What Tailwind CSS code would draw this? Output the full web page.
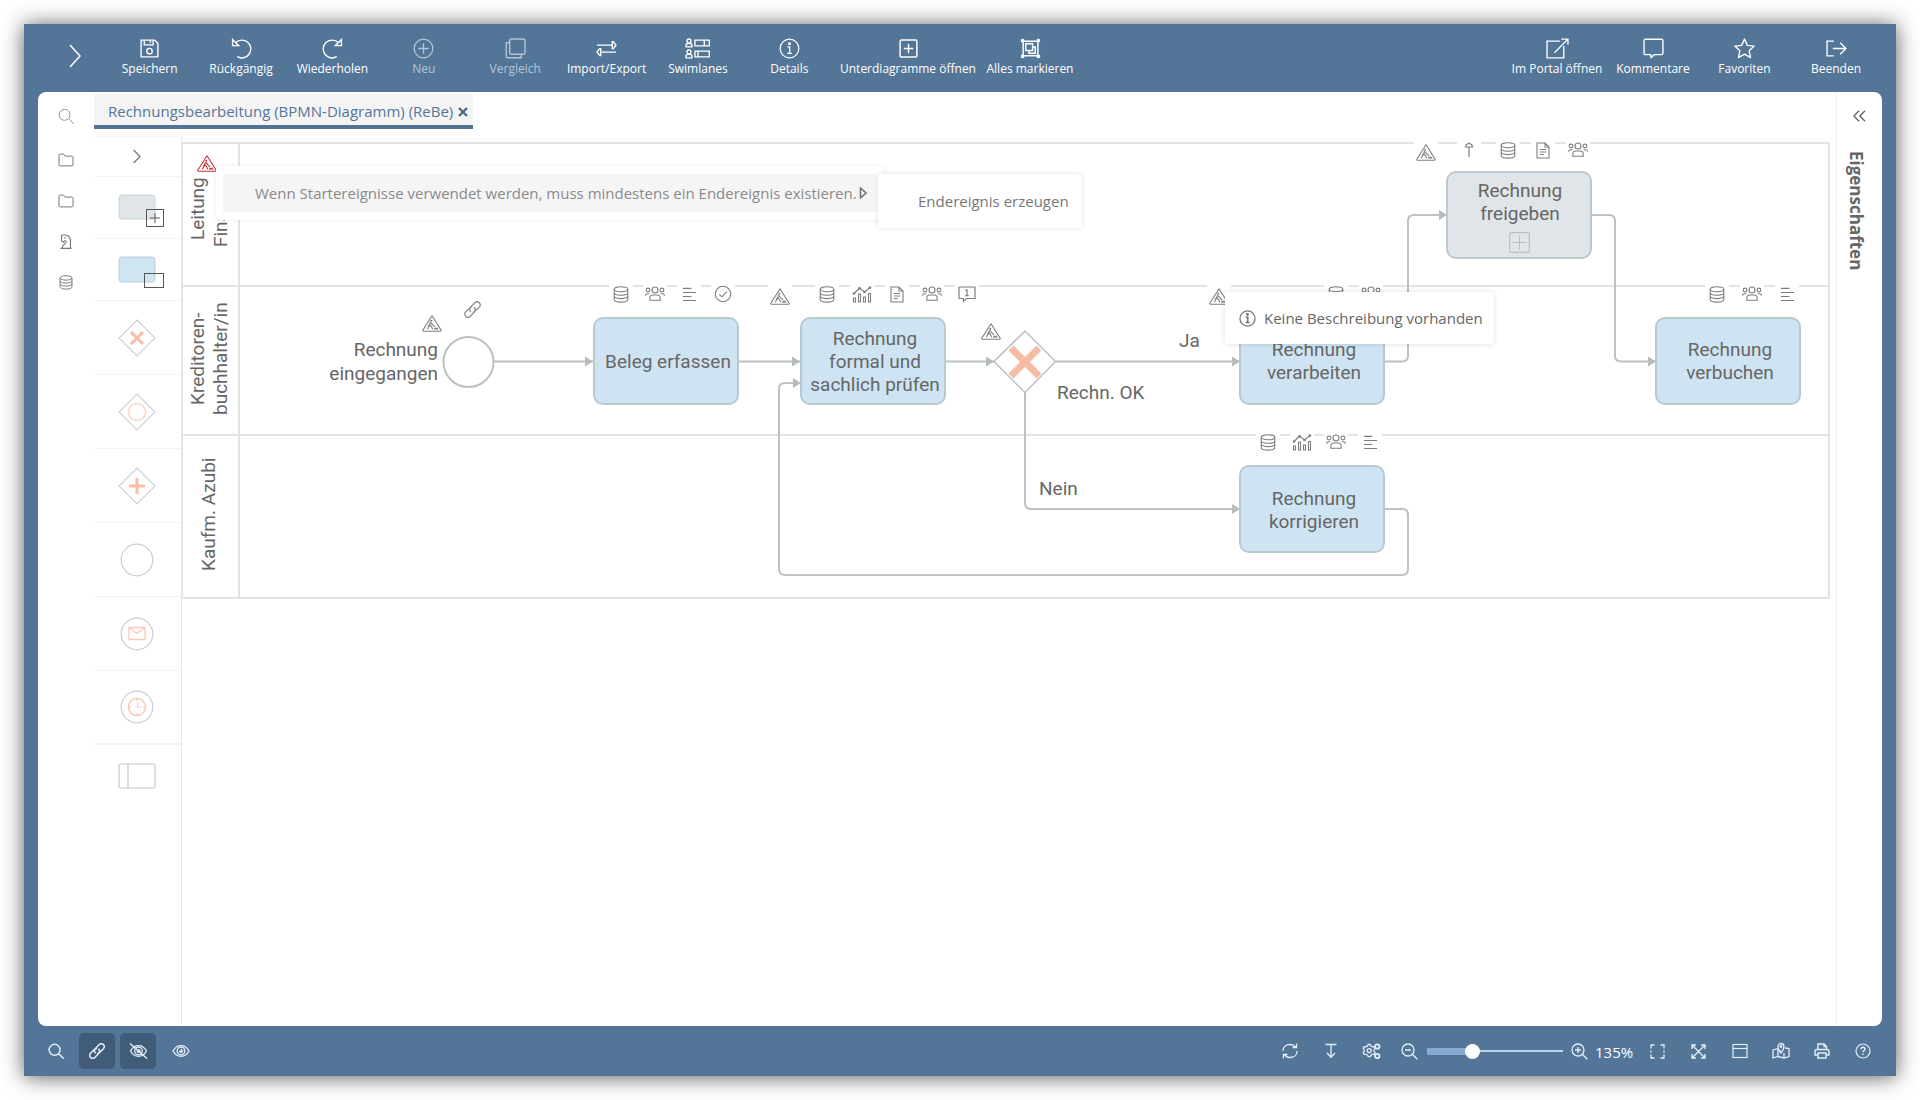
<!DOCTYPE html>
<html lang="de">
<head>
<meta charset="utf-8">
<title>Rechnungsbearbeitung (BPMN-Diagramm)</title>
<script src="https://cdn.jsdelivr.net/npm/@tailwindcss/browser@4"></script>
</head>
<body class="flex min-h-screen bg-white p-6 font-['Open_Sans',sans-serif]">

<svg class="hidden" aria-hidden="true">
  <symbol id="warn" viewBox="0 0 20 17"><path d="M10 .8 19.2 15.2q.3 1-.7 1H1.500q-1 0-.7-1Z" fill="none" stroke="currentColor" stroke-width="1.100" stroke-linejoin="round"/><circle cx="9.200" cy="5.700" r="1" fill="currentColor"/><path d="M8.500 7 7.600 10l2 1.500 1 2.700M7.600 10l-2.300 4.200M8.800 7.500l1.800 2.200 2.600 2.200M6 11.200l2.500-2" fill="none" stroke="currentColor" stroke-width="1.100"/><path d="M11.500 14.500 13 12.600l1 .7 1-1 1.700 2.200Z" fill="currentColor"/></symbol>
  <symbol id="db" viewBox="0 0 16 17"><g fill="none" stroke="currentColor" stroke-width="1.100"><ellipse cx="8" cy="3.300" rx="6.800" ry="2.500"/><path d="M1.200 3.300v10.200c0 1.400 3 2.600 6.800 2.600s6.800-1.200 6.800-2.600V3.300M1.200 6.700c0 1.400 3 2.500 6.800 2.500s6.800-1.100 6.800-2.500M1.200 10.100c0 1.400 3 2.500 6.800 2.500s6.800-1.100 6.800-2.500"/></g></symbol>
  <symbol id="people" viewBox="0 0 20 16"><g fill="none" stroke="currentColor" stroke-width="1.100"><circle cx="10" cy="4" r="3"/><circle cx="3" cy="4" r="1.900"/><circle cx="17" cy="4" r="1.900"/><path d="M4.800 14.300v-2c0-2.300 1.200-3.300 3-3.300h4.400c1.800 0 3 1 3 3.300v2ZM.6 9.700c0-1.500.9-2 2-2h1.800M19.400 9.700c0-1.500-.9-2-2-2h-1.800"/></g></symbol>
  <symbol id="lines" viewBox="0 0 16 16"><path d="M1 1.500h9M1 5.800h14M1 10.100h9M1 14.400h14" fill="none" stroke="currentColor" stroke-width="1.200"/></symbol>
  <symbol id="check" viewBox="0 0 18 18"><g fill="none" stroke="currentColor" stroke-width="1.100"><circle cx="9" cy="9" r="7.700"/><path d="m5.200 9.300 2.700 2.500 5-5.200"/></g></symbol>
  <symbol id="chart" viewBox="0 0 20 17"><g fill="none" stroke="currentColor" stroke-width="1.100"><path d="M1.500 12h2v4h-2ZM6.500 8h2v8h-2ZM11.500 11h2v5h-2ZM16.500 7.500h2V16h-2ZM2 7.500 7.500 2l5 4L18 1.500"/><circle cx="2" cy="7.500" r=".8"/><circle cx="7.500" cy="2.300" r=".8"/><circle cx="12.500" cy="6" r=".8"/><circle cx="18" cy="1.600" r=".8"/></g></symbol>
  <symbol id="doc" viewBox="0 0 14 17"><path d="M1 1h8l4 4v11H1ZM9 1v4h4M3.800 7.500h6.400M3.800 10h6.400M3.800 12.500h4" fill="none" stroke="currentColor" stroke-width="1.100"/></symbol>
  <symbol id="note" viewBox="0 0 18 17"><path d="M1 1h16v11.500H8.500L5.500 15.600V12.500H1ZM7.500 4.700 9 3.700v5.800M7.300 9.600h3.400" fill="none" stroke="currentColor" stroke-width="1.200" stroke-linejoin="round"/></symbol>
  <symbol id="up" viewBox="0 0 12 16"><path d="M6 15V5M2.500 5 3.300 2.700 6 1.300l2.700 1.400.8 2.300Z" fill="none" stroke="currentColor" stroke-width="1.200"/></symbol>
  <symbol id="link" viewBox="1.500 1.500 15 15"><g fill="none" stroke="currentColor" stroke-linecap="round"><path d="m7.400 10.600c-1-1.200-1-2.900.1-4L11 3c1.200-1.200 2.900-1.200 4 0s1.100 2.700 0 3.900L11.600 10.300c-.6.600-1.200.9-2 .9M10.600 7.400c1 1.200 1 2.900-.1 4L7 15c-1.200 1.200-2.900 1.200-4 0s-1.100-2.700 0-3.900L6.400 7.700c.6-.6 1.200-.9 2-.9"/></g></symbol>
  <symbol id="search" viewBox="0 0 18 18"><path d="M12.800 7.200a5.800 5.800 0 1 1-11.600 0a5.800 5.800 0 0 1 11.600 0ZM11.300 11.300l5.500 5.500" fill="none" stroke="currentColor"/></symbol>
  <symbol id="folder" viewBox="0 0 16 14"><path d="M1 2.300q0-1.200 1.200-1.200h3.300l1.700 2h6.600q1.200 0 1.200 1.200v7.400q0 1.200-1.200 1.200H2.200q-1.200 0-1.200-1.200Z" fill="none" stroke="currentColor"/></symbol>
  <symbol id="eye" viewBox="0 0 18 14"><g fill="none" stroke="currentColor" stroke-width="1.300"><path d="M1 7c2-3.600 4.800-5.300 8-5.300S15 3.400 17 7c-2 3.600-4.800 5.300-8 5.300S3 10.600 1 7Z"/><circle cx="9" cy="7" r="3.800"/><path d="M9 5.200A1.800 1.800 0 1 1 7.200 7H9Z" fill="currentColor" stroke-width=".5"/></g></symbol>
</svg>

<div class="flex min-w-0 flex-1 flex-col bg-[#537597] shadow-[0_1px_20px_rgba(50,50,50,0.8)]">

  <header class="flex h-[68px] items-stretch text-[12px] leading-4 text-white">
    <button class="ml-[26px] flex w-[54px] items-center justify-center pr-1 pb-1" aria-label="Menü">
      <svg class="h-6 w-3" viewBox="0 0 12 24" fill="none" stroke="currentColor" stroke-width="1.500"><path d="m1 1 10 11L1 23"/></svg>
    </button>
    <div class="grid w-[731px] grid-cols-8">
      <button class="flex flex-col items-center pt-[14px] whitespace-nowrap">
        <svg class="mb-[2px] size-[21px]" viewBox="0 0 20 20" fill="none" stroke="currentColor" stroke-width="1.300"><path d="M2 2h13l3 3v13H2ZM5 2v4.500h8.500V2M10.800 2v2.500"/><circle cx="10" cy="12.500" r="2.600"/></svg>Speichern</button>
      <button class="flex flex-col items-center pt-[14px] whitespace-nowrap">
        <svg class="mb-[2px] size-[21px]" viewBox="0 0 20 20" fill="none" stroke="currentColor" stroke-width="1.300"><path d="M1.500 1.500v5.800h5.800ZM4.500 4.300a8.500 8.500 0 1 1 1.500 13.500"/></svg>Rückgängig</button>
      <button class="flex flex-col items-center pt-[14px] whitespace-nowrap">
        <svg class="mb-[2px] size-[21px]" viewBox="0 0 20 20" fill="none" stroke="currentColor" stroke-width="1.300"><path d="M18.500 1.500v5.800h-5.800ZM15.500 4.300a8.500 8.500 0 1 0-1.500 13.500"/></svg>Wiederholen</button>
      <button class="flex flex-col items-center pt-[14px] whitespace-nowrap text-[#b4c5d8]">
        <svg class="mb-[2px] size-[21px]" viewBox="0 0 20 20" fill="none" stroke="currentColor" stroke-width="1.200"><circle cx="10" cy="10" r="8.900"/><path d="M10 5v10M5 10h10"/></svg>Neu</button>
      <button class="flex flex-col items-center pt-[14px] whitespace-nowrap text-[#b4c5d8]">
        <svg class="mb-[2px] size-[21px]" viewBox="0 0 20 20" fill="none" stroke="currentColor" stroke-width="1.300"><rect x="4.500" y="1" width="14.500" height="14.500" rx="1.500"/><path d="M4.500 4.500H1.200v13q0 1.300 1.300 1.300h13v-3.300"/></svg>Vergleich</button>
      <button class="flex flex-col items-center pt-[14px] whitespace-nowrap">
        <svg class="mb-[2px] size-[21px]" viewBox="0 0 20 20" fill="none" stroke="currentColor" stroke-width="1.300"><path d="M1 6.800h14.500V3.500h1l2.500 3.300-2.500 3.300h-1V6.800M19 13.400H4.500v-3.300h-1L1 13.400l2.500 3.300h1v-3.300"/></svg>Import/Export</button>
      <button class="flex flex-col items-center pt-[14px] whitespace-nowrap">
        <svg class="mb-[2px] h-[21px] w-[25px]" viewBox="0 0 24 20" fill="none" stroke="currentColor" stroke-width="1.300"><circle cx="3.800" cy="2.800" r="1.900"/><path d="M1 8.500V7q0-1.800 1.800-1.800h2Q6.600 5.200 6.600 7v1.500Z"/><circle cx="3.800" cy="13.300" r="1.900"/><path d="M1 19v-1.500q0-1.800 1.800-1.800h2q1.800 0 1.800 1.800V19ZM9.500 2h13.800v5.500H9.500ZM18.500 2v5.500M9.500 12.500h13.800V18H9.500ZM12.500 12.500V18"/></svg>Swimlanes</button>
      <button class="flex flex-col items-center pt-[14px] whitespace-nowrap">
        <svg class="mb-[2px] size-[21px]" viewBox="0 0 20 20" fill="none" stroke="currentColor" stroke-width="1.200"><circle cx="10" cy="10" r="8.900"/><path d="M8 8.500h2.200v6M7.800 14.700h4.600"/><circle cx="10" cy="5.500" r=".8" fill="currentColor"/></svg>Details</button>
    </div>
    <button class="flex w-[146px] flex-col items-center pt-[14px] whitespace-nowrap">
      <svg class="mb-[2px] size-[21px]" viewBox="0 0 20 20" fill="none" stroke="currentColor" stroke-width="1.400"><rect x="2" y="2" width="16" height="16" rx="1"/><path d="M10 5.500v9M5.500 10h9"/></svg>Unterdiagramme öffnen</button>
    <button class="flex w-[98px] flex-col items-center pt-[14px] whitespace-nowrap">
      <svg class="mb-[2px] size-[21px]" viewBox="0 0 20 20" fill="none" stroke="currentColor" stroke-width="1.400"><path d="M3 3h14v14H3ZM5.500 5.500h6.500V12H5.500ZM12 8.500h2.500v6h-6V12"/><path d="M1.300 1.300h2.400v2.400H1.300ZM16.300 1.300h2.400v2.400h-2.400ZM1.300 16.300h2.400v2.400H1.300ZM16.300 16.300h2.400v2.400h-2.400Z" fill="currentColor" stroke-width=".8"/></svg>Alles markieren</button>
    <div class="mr-[14px] ml-auto flex">
      <button class="flex w-[100px] flex-col items-center pt-[14px] whitespace-nowrap">
        <svg class="mb-[2px] h-[21px] w-[23px]" viewBox="0 0 22 20" fill="none" stroke="currentColor" stroke-width="1.300"><path d="M13.500 3H1v16h16V7.500M8 14 20.500 1.500M14.500 1H21v5.500"/></svg>Im Portal öffnen</button>
      <button class="flex w-[92px] flex-col items-center pt-[14px] whitespace-nowrap">
        <svg class="mb-[2px] size-[21px]" viewBox="0 0 20 20" fill="none" stroke="currentColor" stroke-width="1.300" stroke-linejoin="round"><path d="M2.500 1.200h15q1.500 0 1.500 1.500v11.600q0 1.500-1.500 1.500H11l-3.500 3v-3h-5Q1 15.800 1 14.300V2.700q0-1.500 1.500-1.500Z"/></svg>Kommentare</button>
      <button class="flex w-[91px] flex-col items-center pt-[14px] whitespace-nowrap">
        <svg class="mb-[2px] size-[21px]" viewBox="0 0 20 20" fill="none" stroke="currentColor" stroke-width="1.300" stroke-linejoin="round"><path d="m10 1 2.700 6 6.500.7-4.800 4.400 1.300 6.600L10 15.400l-5.700 3.300 1.300-6.600L.8 7.700l6.500-.7Z"/></svg>Favoriten</button>
      <button class="flex w-[92px] flex-col items-center pt-[14px] whitespace-nowrap">
        <svg class="mb-[2px] size-[21px]" viewBox="0 0 20 20" fill="none" stroke="currentColor" stroke-width="1.300"><path d="M7.500 3H1v14h6.500M6.500 10h12.500M13.500 4.500l5.500 5.500-5.500 5.500"/></svg>Beenden</button>
    </div>
  </header>

  <main class="mx-[14px] flex min-h-0 flex-1 overflow-hidden rounded-lg bg-white">
    <nav class="flex w-14 flex-col items-center pt-[15px] text-[#777]">
      <button class="flex h-[18px] w-[41px] items-center justify-center text-[#888]" aria-label="Suche"><svg class="size-[17px]"><use href="#search"/></svg></button>
      <button class="mt-[14px] flex size-[41px] items-center justify-center" aria-label="Ordner"><svg class="h-[14px] w-4"><use href="#folder"/></svg></button>
      <button class="flex size-[41px] items-center justify-center" aria-label="Ordner 2"><svg class="h-[14px] w-4"><use href="#folder"/></svg></button>
      <button class="flex size-[41px] items-center justify-center" aria-label="Strategie"><svg class="h-[15px] w-[14px]" viewBox="0 0 14 15" fill="none" stroke="currentColor" stroke-width="1.100"><path d="M1.500 14.400h11M3.500 14v-1.500l4.300-5M2.500 1h4c3.500.6 5 2.800 5 6.500V14M2.500 1v6l2 1 2.500-1.800M5 3.500l1.500.7"/></svg></button>
      <button class="flex size-[41px] items-center justify-center" aria-label="Datenbank"><svg class="h-[17px] w-[14px]"><use href="#db"/></svg></button>
    </nav>

    <div class="flex min-w-0 flex-1 flex-col">
      <div class="flex h-11 items-start">
        <div class="mt-[2px] flex h-[35px] w-[379px] items-center justify-between border-b-4 border-[#537394] bg-[#f4f4f5] pt-[2px] pr-[5px] pl-[14px] text-[#54769a]">
          <a href="#" class="text-[15px] leading-5 whitespace-nowrap">Rechnungsbearbeitung (BPMN-Diagramm) (ReBe)</a>
          <button aria-label="Schließen"><svg class="mt-[2px] size-[10px]" viewBox="0 0 10 10" stroke="#4b6a8a" stroke-width="2.400"><path d="m1 1 8 8M9 1 1 9"/></svg></button>
        </div>
      </div>

      <div class="flex min-h-0 flex-1">
        <aside class="flex w-[88px] flex-col border-t border-r border-t-[#f7f7f7] border-r-[#e8e8e8]">
          <button class="flex h-10 items-center justify-center border-b border-[#f3f3f3] pr-[2px] text-[#777]" aria-label="Palette ausklappen"><svg class="h-[15px] w-2" viewBox="0 0 8 15" fill="none" stroke="currentColor" stroke-width="1.200"><path d="m.6 1 6.500 6.500L.6 14"/></svg></button>
          <button class="flex h-[62px] items-center justify-center border-b border-[#f3f3f3] pt-[6px] pl-2" aria-label="Unterprozess">
            <svg class="h-[34px] w-[48px]" viewBox="0 0 48 34" fill="none"><rect x="1" y="1" width="36" height="24" rx="3" fill="#e0e5e8" stroke="#c9d6da"/><rect x="28.500" y="15.500" width="17" height="17" stroke="#555" /><path d="M37 19v10M32 24h10" stroke="#555"/></svg></button>
          <button class="flex h-[62px] items-center justify-center border-b border-[#f3f3f3] pt-[6px] pl-2" aria-label="Aufgabe">
            <svg class="h-[34px] w-[48px]" viewBox="0 0 48 34" fill="none"><rect x="1" y="1" width="36" height="25" rx="3" fill="#cfe5f2" stroke="#bacdd8"/><rect x="26.500" y="17.500" width="19" height="14" stroke="#555"/></svg></button>
          <button class="flex h-[74px] items-center justify-center border-b border-[#f3f3f3] pr-[2px]" aria-label="Exklusives Gateway">
            <svg class="size-[38px]" viewBox="0 0 38 38" fill="none"><path d="M19 1 37 19 19 37 1 19Z" stroke="#ccd2d5" stroke-width="1.200"/><path d="m13 13 12 12M25 13 13 25" stroke="#f6bda8" stroke-width="3"/></svg></button>
          <button class="flex h-[74px] items-center justify-center border-b border-[#f3f3f3] pr-[2px]" aria-label="Inklusives Gateway">
            <svg class="size-[38px]" viewBox="0 0 38 38" fill="none"><path d="M19 1 37 19 19 37 1 19Z" stroke="#ccd2d5" stroke-width="1.200"/><circle cx="19" cy="19" r="8.500" stroke="#f9d8ca" stroke-width="1.500"/></svg></button>
          <button class="flex h-[74px] items-center justify-center border-b border-[#f3f3f3] pr-[2px]" aria-label="Paralleles Gateway">
            <svg class="size-[38px]" viewBox="0 0 38 38" fill="none"><path d="M19 1 37 19 19 37 1 19Z" stroke="#ccd2d5" stroke-width="1.200"/><path d="M19 11v16M11 19h16" stroke="#f6bda8" stroke-width="3"/></svg></button>
          <button class="flex h-[74px] items-center justify-center border-b border-[#f3f3f3] pr-[2px]" aria-label="Startereignis">
            <svg class="size-[34px]" viewBox="0 0 34 34" fill="none"><circle cx="17" cy="17" r="15.800" stroke="#ccc" stroke-width="1.200"/></svg></button>
          <button class="flex h-[74px] items-center justify-center border-b border-[#f3f3f3] pr-[2px]" aria-label="Nachrichtenereignis">
            <svg class="size-[34px]" viewBox="0 0 34 34" fill="none"><circle cx="17" cy="17" r="15.800" stroke="#ccc" stroke-width="1.200"/><path d="M9 10.500h16v12H9ZM9 10.500l8 6 8-6" stroke="#f8c9b6" stroke-width="1.300"/></svg></button>
          <button class="flex h-[74px] items-center justify-center border-b-2 border-[#f3f3f3] pr-[2px]" aria-label="Zeitereignis">
            <svg class="size-[34px]" viewBox="0 0 34 34" fill="none"><circle cx="17" cy="17" r="15.800" stroke="#c6cfd6" stroke-width="1.200"/><circle cx="17" cy="17" r="8.500" stroke="#f8c9b6" stroke-width="1.500"/><path d="M18 11.500 17 17h4.500" stroke="#f3c9b8"/><path d="M17 9v2M17 23v2M9 17h2M23 17h2" stroke="#f8c9b6"/></svg></button>
          <button class="flex h-[62px] items-center justify-center pr-[2px]" aria-label="Pool">
            <svg class="h-[26px] w-[38px]" viewBox="0 0 38 26" fill="none" stroke="#c8c8c8" stroke-width="1.200"><rect x="1" y="1" width="36" height="24" rx="1.500"/><path d="M10 1v24"/></svg></button>
        </aside>

        <!-- Diagram canvas: nodes, flows and badges lie freely over the pool -->
        <section class="relative min-w-0 flex-1 overflow-hidden font-[Roboto,sans-serif] text-[19px] leading-[23px] text-[#666]">
          <div class="mt-[6px] w-[1648px] border-2 border-l border-[#e2e3e3]">
            <div class="flex h-[143px] border-b-2 border-[#e2e3e3]">
              <h2 class="flex w-[57px] rotate-180 items-center justify-center border-l-2 border-[#e2e3e3] pt-3 pl-1 text-center [writing-mode:vertical-rl]"><span>Leitung<br>Finanzen</span></h2>
            </div>
            <div class="flex h-[149px] border-b-2 border-[#e2e3e3]">
              <h2 class="flex w-[57px] rotate-180 items-center justify-center border-l-2 border-[#e2e3e3] pt-1 pl-1 text-center [writing-mode:vertical-rl]"><span>Kreditoren-<br>buchhalter/in</span></h2>
            </div>
            <div class="flex h-[161px]">
              <h2 class="flex w-[57px] rotate-180 items-center justify-center border-l-2 border-[#e2e3e3] pt-1 pl-1 text-center [writing-mode:vertical-rl]">Kaufm. Azubi</h2>
            </div>
          </div>

          <svg class="absolute top-0 left-0 h-[480px] w-[1654px]" viewBox="0 0 1654 480" fill="none" stroke="#bcc1c2" stroke-width="2">
            <defs><marker id="tip" viewBox="0 0 8 10" refX="8" refY="5" markerWidth="8" markerHeight="10" markerUnits="userSpaceOnUse" orient="auto"><path d="M0 0 8 5 0 10Z" fill="#b6bcbd" stroke="none"/></marker></defs>
            <path d="M312 225.500h99" marker-end="url(#tip)"/>
            <path d="M557 225.500h61" marker-end="url(#tip)"/>
            <path d="M764 225.500h48" marker-end="url(#tip)"/>
            <path d="M874 225.500h184" marker-end="url(#tip)"/>
            <path d="M1203 225.500h17q6 0 6-6V85q0-6 6-6h33" marker-end="url(#tip)"/>
            <path d="M1410 79h17q6 0 6 6v134.500q0 6 6 6h35" marker-end="url(#tip)"/>
            <path d="M843 256v111q0 6 6 6h209" marker-end="url(#tip)"/>
            <path d="M1203 373h17q6 0 6 6v54q0 6-6 6H603q-6 0-6-6V253q0-6 6-6h16" marker-end="url(#tip)"/>
            <circle cx="286.500" cy="226" r="25" fill="#fff"/>
            <path d="M843 195 873.500 225.500 843 256.500 812 225.500Z" fill="#fff" stroke-width="1.500"/>
            <path d="m829 212 28 28M857 212l-28 28" stroke="#f5bba5" stroke-width="7"/>
          </svg>

          <div class="absolute top-[181px] left-[411px] flex h-[88px] w-[146px] items-center justify-center rounded-[10px] border-2 border-[#b8c9d2] bg-[#cee4f2] pl-1 text-center">Beleg erfassen</div>
          <div class="absolute top-[181px] left-[618px] flex h-[88px] w-[146px] items-center justify-center rounded-[10px] border-2 border-[#b8c9d2] bg-[#cee4f2] pl-1 text-center">Rechnung<br>formal und<br>sachlich prüfen</div>
          <div class="absolute top-[181px] left-[1057px] flex h-[88px] w-[146px] items-center justify-center rounded-[10px] border-2 border-[#b8c9d2] bg-[#cee4f2] pl-1 text-center">Rechnung<br>verarbeiten</div>
          <div class="absolute top-[329px] left-[1057px] flex h-[88px] w-[146px] items-center justify-center rounded-[10px] border-2 border-[#b8c9d2] bg-[#cee4f2] pt-[2px] pl-1 text-center">Rechnung<br>korrigieren</div>
          <div class="absolute top-[181px] left-[1473px] flex h-[88px] w-[146px] items-center justify-center rounded-[10px] border-2 border-[#b8c9d2] bg-[#cee4f2] pl-1 text-center">Rechnung<br>verbuchen</div>
          <div class="absolute top-[35px] left-[1264px] flex h-[88px] w-[146px] flex-col items-center rounded-[10px] border-2 border-[#bec8ca] bg-[#dfe5e8] pt-[6px] text-center"><span class="pl-[2px]">Rechnung<br>freigeben</span>
            <svg class="mt-[7px] size-[21px]" viewBox="0 0 21 21" fill="none" stroke="#b9bfc2"><rect x=".7" y=".7" width="19.600" height="19.600" rx="1" stroke-width="1.200"/><path d="M10.500 3.500v14M3.500 10.500h14"/></svg></div>

          <p class="absolute top-[202px] left-[128px] w-[128px] text-right leading-6">Rechnung eingegangen</p>
          <p class="absolute top-[193px] left-[997px]">Ja</p>
          <p class="absolute top-[245px] left-[875px]">Rechn. OK</p>
          <p class="absolute top-[341px] left-[857px]">Nein</p>

          <div class="absolute top-[19px] left-[15px] text-[#cb3038]"><svg class="h-[17px] w-5"><use href="#warn"/></svg></div>
          <div class="absolute top-[175px] left-[238px] flex size-6 items-center justify-center bg-white text-[#7c7f7f]"><svg class="h-[17px] w-5"><use href="#warn"/></svg></div>
          <div class="absolute top-[161px] left-[278px] flex size-6 items-center justify-center bg-white text-[#7c7f7f]"><svg class="size-[17px]"><use href="#link"/></svg></div>
          <div class="absolute top-[148px] left-[586px] flex size-6 items-center justify-center bg-white text-[#7c7f7f]"><svg class="h-[17px] w-5"><use href="#warn"/></svg></div>
          <div class="absolute top-[183px] left-[797px] flex size-6 items-center justify-center bg-white text-[#7c7f7f]"><svg class="h-[17px] w-5"><use href="#warn"/></svg></div>
          <div class="absolute top-[148px] left-[1025px] flex size-6 items-center justify-center bg-white text-[#7c7f7f]"><svg class="h-[17px] w-5"><use href="#warn"/></svg></div>
          <div class="absolute top-1 left-[1232px] flex size-6 items-center justify-center bg-white text-[#7c7f7f]"><svg class="h-[17px] w-5"><use href="#warn"/></svg></div>
          <div class="absolute top-[2px] left-[1275px] flex size-6 items-center justify-center bg-white text-[#7c7f7f]"><svg class="h-4 w-3"><use href="#up"/></svg></div>

          <div class="absolute top-[146px] left-[427px] flex gap-[10px] text-[#7c7f7f]">
            <span class="flex size-6 items-center justify-center bg-white"><svg class="h-[17px] w-4"><use href="#db"/></svg></span>
            <span class="flex size-6 items-center justify-center bg-white"><svg class="h-4 w-5"><use href="#people"/></svg></span>
            <span class="flex size-6 items-center justify-center bg-white"><svg class="size-[15px]"><use href="#lines"/></svg></span>
            <span class="flex size-6 items-center justify-center bg-white"><svg class="size-[18px]"><use href="#check"/></svg></span>
          </div>
          <div class="absolute top-[146px] left-[633px] flex gap-[11px] text-[#7c7f7f]">
            <span class="flex size-6 items-center justify-center bg-white"><svg class="h-[17px] w-4"><use href="#db"/></svg></span>
            <span class="flex size-6 items-center justify-center bg-white"><svg class="h-[17px] w-5"><use href="#chart"/></svg></span>
            <span class="flex size-6 items-center justify-center bg-white"><svg class="h-[17px] w-[14px]"><use href="#doc"/></svg></span>
            <span class="flex size-6 items-center justify-center bg-white"><svg class="h-4 w-5"><use href="#people"/></svg></span>
            <span class="flex size-6 items-center justify-center bg-white"><svg class="h-[17px] w-[18px]"><use href="#note"/></svg></span>
          </div>
          <div class="absolute top-[146px] left-[1142px] flex gap-[11px] text-[#7c7f7f]">
            <span class="flex size-6 items-center justify-center bg-white"><svg class="h-[17px] w-4"><use href="#db"/></svg></span>
            <span class="flex size-6 items-center justify-center bg-white"><svg class="h-4 w-5"><use href="#people"/></svg></span>
          </div>
          <div class="absolute top-[294px] left-[1074px] flex gap-[10px] text-[#7c7f7f]">
            <span class="flex size-6 items-center justify-center bg-white"><svg class="h-[17px] w-4"><use href="#db"/></svg></span>
            <span class="flex size-6 items-center justify-center bg-white"><svg class="h-[17px] w-5"><use href="#chart"/></svg></span>
            <span class="flex size-6 items-center justify-center bg-white"><svg class="h-4 w-5"><use href="#people"/></svg></span>
            <span class="flex size-6 items-center justify-center bg-white"><svg class="size-[15px]"><use href="#lines"/></svg></span>
          </div>
          <div class="absolute top-[146px] left-[1523px] flex gap-[11px] text-[#7c7f7f]">
            <span class="flex size-6 items-center justify-center bg-white"><svg class="h-[17px] w-4"><use href="#db"/></svg></span>
            <span class="flex size-6 items-center justify-center bg-white"><svg class="h-4 w-5"><use href="#people"/></svg></span>
            <span class="flex size-6 items-center justify-center bg-white"><svg class="size-[15px]"><use href="#lines"/></svg></span>
          </div>
          <div class="absolute top-[2px] left-[1314px] flex gap-[11px] text-[#7c7f7f]">
            <span class="flex size-6 items-center justify-center bg-white"><svg class="h-[17px] w-4"><use href="#db"/></svg></span>
            <span class="flex size-6 items-center justify-center bg-white"><svg class="h-[17px] w-[14px]"><use href="#doc"/></svg></span>
            <span class="flex size-6 items-center justify-center bg-white"><svg class="h-4 w-5"><use href="#people"/></svg></span>
          </div>

          <div class="absolute top-[30px] left-[34px] w-[668px] rounded-sm bg-white px-[7px] py-2 font-['Open_Sans',sans-serif] text-[15px] shadow-[0_0_5px_rgba(0,0,0,0.08)]">
            <button class="flex h-[38px] w-full items-center justify-between bg-[#f5f5f5] pr-[10px] pl-8 whitespace-nowrap text-[#8a8a8a]">Wenn Startereignisse verwendet werden, muss mindestens ein Endereignis existieren.
              <svg class="h-3 w-2" viewBox="0 0 8 12" fill="none" stroke="#777" stroke-width="1.600"><path d="M1.500 1v10L7 6Z"/></svg></button>
          </div>
          <button class="absolute top-[38px] left-[696px] h-[54px] w-[204px] rounded-sm bg-white pl-10 text-left font-['Open_Sans',sans-serif] text-[15px] whitespace-nowrap text-[#777] shadow-[0_0_5px_rgba(0,0,0,0.12)]">Endereignis erzeugen</button>
          <div role="tooltip" class="absolute top-[156px] left-[1043px] flex h-[52px] w-[269px] items-center gap-2 rounded-sm bg-white pl-[14px] font-['Open_Sans',sans-serif] text-[15px] whitespace-nowrap shadow-[0_0_6px_rgba(0,0,0,0.12)]">
            <svg class="size-[17px]" viewBox="0 0 20 20" fill="none" stroke="#777" stroke-width="1.500"><circle cx="10" cy="10" r="8.900"/><path d="M8 8.500h2.200v6M7.800 14.700h4.600" stroke-width="2"/><circle cx="10" cy="5.300" r="1" fill="#777"/></svg>Keine Beschreibung vorhanden</div>
        </section>
      </div>
    </div>

    <aside class="flex w-[46px] flex-col items-center border-l border-[#f0f0f0] pt-[18px] text-[#666]">
      <button aria-label="Eigenschaften ausklappen"><svg class="h-3 w-[13px]" viewBox="0 0 13 12" fill="none" stroke="currentColor" stroke-width="1.400"><path d="M6 .7.900 6 6 11.300M12 .7 6.900 6l5.100 5.300"/></svg></button>
      <h2 class="mt-[29px] pr-[6px] text-[17px] font-bold [writing-mode:vertical-rl]">Eigenschaften</h2>
    </aside>
  </main>

  <footer class="flex h-[50px] items-center justify-between pr-[13px] pl-[14px] text-[#e3eefa]">
    <div class="flex items-center gap-[5px]">
      <button class="flex size-9 items-center justify-center" aria-label="Suchen"><svg class="size-[17px] [stroke-width:1.500]"><use href="#search"/></svg></button>
      <button class="flex size-9 items-center justify-center rounded-[5px] bg-[#415c79]" aria-label="Verknüpfungen"><svg class="size-4 [stroke-width:1.400]"><use href="#link"/></svg></button>
      <button class="flex size-9 items-center justify-center rounded-[5px] bg-[#415c79]" aria-label="Ausblenden"><svg class="h-4 w-[19px]" viewBox="0 0 19 16"><svg x=".5" y="1" width="18" height="14"><use href="#eye"/></svg><path d="m1 .5 17 15" stroke="currentColor" stroke-width="1.400"/></svg></button>
      <button class="flex h-9 w-10 items-center justify-center" aria-label="Einblenden"><svg class="h-[14px] w-[18px]"><use href="#eye"/></svg></button>
    </div>
    <div class="flex items-center">
      <button class="flex h-9 w-[41px] items-center justify-center" aria-label="Aktualisieren"><svg class="size-4" viewBox="0 0 16 16" fill="none" stroke="currentColor" stroke-width="1.300"><path d="M1 8c0-4 3-6.500 7-6.500 2.500 0 4 .8 5.500 2.500M10.500 4.500h4V.500M15 8c0 4-3 6.500-7 6.500-2.500 0-4-.8-5.500-2.500M5.500 11.500h-4v4"/></svg></button>
      <button class="flex h-9 w-[41px] items-center justify-center" aria-label="Herunterladen"><svg class="size-4" viewBox="0 0 16 16" fill="none" stroke="currentColor" stroke-width="1.300"><path d="M2.500 1.500h11M8 1.500V14M4 10l4 4.300L12 10"/></svg></button>
      <button class="flex h-9 w-[41px] items-center justify-center" aria-label="Einstellungen"><svg class="h-[17px] w-[19px]" viewBox="0 0 19 17" fill="none" stroke="currentColor" stroke-width="1.300"><path d="m5.500 3 .7-1.500h2L9 3l1.500.8 1.600-.2 1 1.700-1 1.300v1.800l1 1.300-1 1.700-1.600-.2L9 12.200l-.8 1.500h-2l-.7-1.500-1.600-.9-1.700.1-1-1.700 1-1.300V6.600l-1-1.300 1-1.700 1.700.2Z"/><circle cx="7.200" cy="7.600" r="2"/><circle cx="15.300" cy="3.500" r="2.200" stroke-width="1.800"/><circle cx="15.300" cy="13" r="2.200" stroke-width="1.800"/></svg></button>
      <button class="flex h-9 w-[35px] items-center justify-center" aria-label="Verkleinern"><svg class="size-[17px]" viewBox="0 0 17 17" fill="none" stroke="currentColor" stroke-width="1.300"><circle cx="7" cy="7" r="6"/><path d="m11.300 11.300 5 5M4 7h6"/></svg></button>
      <input type="range" min="0" max="100" value="31" aria-label="Zoom" class="h-4 w-[136px] appearance-none bg-[linear-gradient(#87aad2,#87aad2),linear-gradient(#bdd6ec,#bdd6ec)] bg-[size:46px_7px,100%_2px] bg-[position:left_center,left_center] bg-no-repeat [&::-webkit-slider-thumb]:size-[15px] [&::-webkit-slider-thumb]:appearance-none [&::-webkit-slider-thumb]:rounded-full [&::-webkit-slider-thumb]:bg-white">
      <button class="flex h-9 w-8 items-center justify-center" aria-label="Vergrößern"><svg class="size-[17px]" viewBox="0 0 17 17" fill="none" stroke="currentColor" stroke-width="1.300"><circle cx="7" cy="7" r="6"/><path d="m11.300 11.300 5 5M4 7h6M7 4v6"/></svg></button>
      <span class="w-[42px] pt-[2px] text-[15px] leading-5 text-white">135%</span>
      <button class="flex h-9 w-[41px] items-center justify-center" aria-label="Einpassen"><svg class="size-[15px]" viewBox="0 0 15 15" fill="none" stroke="currentColor" stroke-width="1.300"><path d="M1 4.500V1h3.500M10.500 1H14v3.500M14 10.500V14h-3.500M4.500 14H1v-3.500M1 6.500v2M14 6.500v2"/></svg></button>
      <button class="flex h-9 w-[41px] items-center justify-center" aria-label="Vollbild"><svg class="size-[15px]" viewBox="0 0 15 15" fill="none" stroke="currentColor" stroke-width="1.400"><path d="m1 1 13 13M14 1 1 14M1 5V1h4M10 1h4v4M14 10v4h-4M5 14H1v-4"/></svg></button>
      <button class="flex h-9 w-[41px] items-center justify-center" aria-label="Fenster"><svg class="size-4" viewBox="0 0 16 16" fill="none" stroke="currentColor" stroke-width="1.200"><rect x="1" y="1.500" width="14" height="13"/><path d="M1 5.500h14"/></svg></button>
      <button class="flex h-9 w-[41px] items-center justify-center" aria-label="Karte"><svg class="size-[18px]" viewBox="0 0 18 18" fill="none" stroke="currentColor" stroke-width="1.300"><path d="M6 6.500 1 8v8l5-1.500 6 1.500 5-1.500v-8l-4-.5M6 7v7.500M12 11v5M9 11C7 8.500 6 6.500 6 4.500a3 3 0 0 1 6 0c0 2-1 4-3 6.500Z"/><circle cx="9" cy="4.500" r=".8"/></svg></button>
      <button class="flex h-9 w-[41px] items-center justify-center" aria-label="Drucken"><svg class="size-4" viewBox="0 0 16 16" fill="none" stroke="currentColor" stroke-width="1.400"><path d="M4 6.500V1h6l2.500 2.500v3M4 12H1V8.500q0-2 2-2h10q2 0 2 2V12h-3M4 10h8v5H4ZM10 1v2.500h2.500"/></svg></button>
      <button class="flex h-9 w-[41px] items-center justify-center" aria-label="Hilfe"><svg class="size-4" viewBox="0 0 16 16" fill="none" stroke="currentColor" stroke-width="1.200"><circle cx="8" cy="8" r="7"/><path d="M6 6.300c0-1.300.8-2 2-2s2 .7 2 1.800c0 1.400-2 1.500-2 3.200M8 10.500V12" stroke-width="1.500"/></svg></button>
    </div>
  </footer>
</div>
</body>
</html>
